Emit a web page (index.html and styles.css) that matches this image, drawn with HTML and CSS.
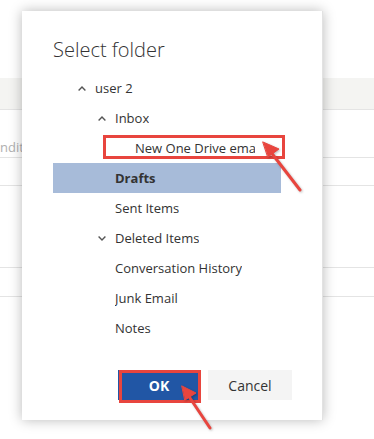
FILE: index.html
```html
<!DOCTYPE html>
<html lang="en">
<head>
    <meta charset="UTF-8">
    <title>Select folder</title>
    <link rel="stylesheet" href="styles.css">
</head>
<body>
    <div class="page-list">
        <div class="row band"></div>
        <div class="row tall"><span class="row-text">Conditions</span></div>
        <div class="row r28"></div>
        <div class="row r82"></div>
        <div class="row r29"></div>
    </div>

    <div class="dialog">
        <h1>Select folder</h1>
        <ul class="tree">
            <li class="node lvl0">
                <span class="chev"><svg width="8" height="5" viewBox="0 0 8 5"><polyline points="0.6,4.4 4,1 7.4,4.4"/></svg></span>
                <span class="label">user 2</span>
            </li>
            <li class="node lvl1">
                <span class="chev"><svg width="8" height="5" viewBox="0 0 8 5"><polyline points="0.6,4.4 4,1 7.4,4.4"/></svg></span>
                <span class="label">Inbox</span>
            </li>
            <li class="node lvl2"><span class="chev"></span><span class="label">New One Drive email</span></li>
            <li class="node lvl1 selected"><span class="chev"></span><span class="label">Drafts</span></li>
            <li class="node lvl1"><span class="chev"></span><span class="label">Sent Items</span></li>
            <li class="node lvl1">
                <span class="chev"><svg width="8" height="5" viewBox="0 0 8 5"><polyline points="0.6,0.6 4,4 7.4,0.6"/></svg></span>
                <span class="label">Deleted Items</span>
            </li>
            <li class="node lvl1"><span class="chev"></span><span class="label">Conversation History</span></li>
            <li class="node lvl1"><span class="chev"></span><span class="label">Junk Email</span></li>
            <li class="node lvl1"><span class="chev"></span><span class="label">Notes</span></li>
        </ul>
        <div class="buttons">
            <button class="btn primary">OK</button>
            <button class="btn">Cancel</button>
        </div>
    </div>

    <!-- annotations drawn over the screenshot -->
    <div class="mark mark-folder"></div>
    <div class="mark mark-ok"></div>
    <svg class="arrows" width="374" height="439" viewBox="0 0 374 439">
        <g stroke="#e8453e" stroke-width="3" stroke-linecap="round" fill="#e8453e">
            <line x1="300" y1="190" x2="270" y2="151"/>
            <polygon points="263,142 279,149 268,157" stroke-width="1"/>
            <line x1="210" y1="428" x2="188" y2="395"/>
            <polygon points="182,386 196,393 185,400" stroke-width="1"/>
        </g>
    </svg>
</body>
</html>
```

FILE: styles.css
```css
* {
    margin: 0;
    padding: 0;
    box-sizing: border-box;
}

body {
    width: 374px;
    height: 439px;
    overflow: hidden;
    position: relative;
    background: #fff;
    font-family: "Open Sans", "Noto Sans", Arial, sans-serif;
    color: #333;
}

.page-list {
    padding-top: 78px;
}

.row {
    border-bottom: 1px solid #e4e4e4;
}

.band {
    height: 32px;
    background: #f4f4f2;
}

.tall {
    height: 48px;
    padding-top: 25px;
}

.row-text {
    display: inline-block;
    margin-left: -16px;
    font-size: 13px;
    color: #b0b0b0;
}

.r28 { height: 28px; }
.r82 { height: 82px; }
.r29 { height: 29px; }

.dialog {
    position: absolute;
    left: 22px;
    top: 11px;
    width: 301px;
    height: 409px;
    background: #fff;
    border-right: 1px solid #e2e2e2;
    box-shadow: 0 0 12px rgba(0, 0, 0, 0.28);
    padding: 0 30px 0 31px;
}

h1 {
    font-weight: 300;
    font-size: 20px;
    color: #333;
    padding-top: 25px;
    height: 62px;
}

.tree {
    list-style: none;
    width: 228px;
}

.node {
    height: 30px;
    display: flex;
    align-items: center;
    font-size: 13px;
    padding-right: 26px;
}

.lvl0 { padding-left: 24px; }
.lvl1 { padding-left: 44px; }
.lvl2 { padding-left: 64px; }

.chev {
    width: 18px;
    flex: none;
    display: flex;
    align-items: center;
}

.chev svg {
    display: block;
    margin-left: 1px;
    fill: none;
    stroke: #555;
    stroke-width: 1.4;
}

.label {
    white-space: nowrap;
    overflow: hidden;
}

.selected {
    background: #a7bbd9;
    font-weight: 700;
}

.buttons {
    display: flex;
    justify-content: flex-end;
    gap: 8px;
    margin-top: 27px;
}

.btn {
    width: 84px;
    height: 30px;
    border: none;
    background: #f4f4f4;
    font-family: inherit;
    font-size: 14px;
    color: #333;
}

.btn.primary {
    width: 82px;
    background: #2156a5;
    color: #fff;
    font-weight: 700;
}

.mark {
    position: absolute;
    border: 3px solid #e8453e;
}

.mark-folder {
    left: 103px;
    top: 135px;
    width: 182px;
    height: 24px;
}

.mark-ok {
    left: 119px;
    top: 370px;
    width: 82px;
    height: 33px;
}

.arrows {
    position: absolute;
    left: 0;
    top: 0;
    filter: drop-shadow(1px 1px 1px rgba(0, 0, 0, 0.25));
}
```
